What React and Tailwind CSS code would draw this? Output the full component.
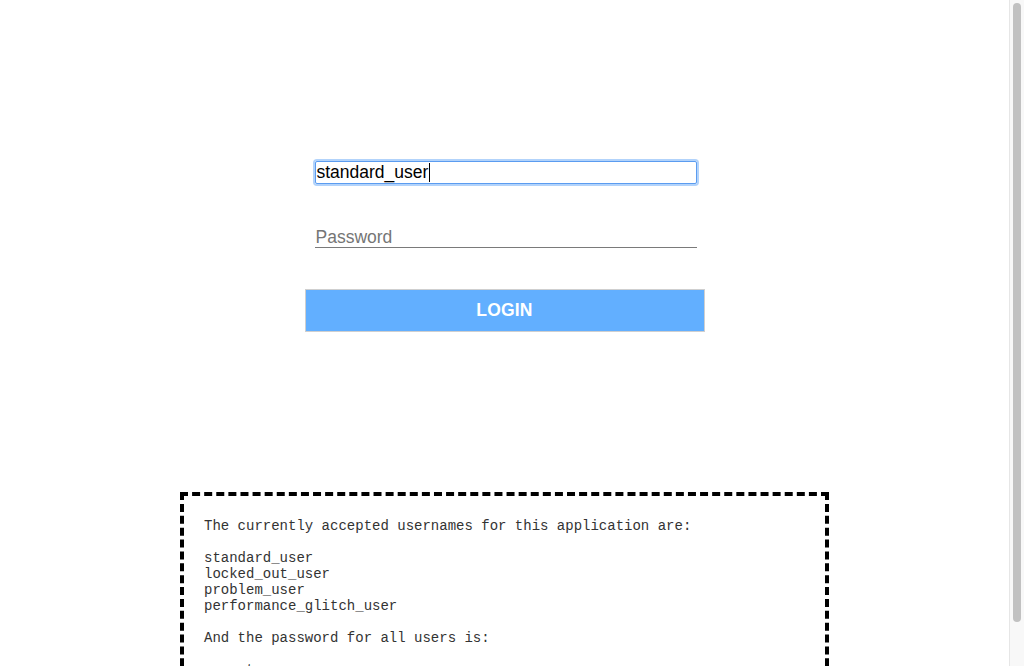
import React from "react";

const usernames = [
  "standard_user",
  "locked_out_user",
  "problem_user",
  "performance_glitch_user",
];

export default function App() {
  return (
    <div className="h-screen flex bg-white font-['Liberation_Sans',Arial,sans-serif]">
      <main className="flex-1 overflow-hidden">
        {/* Login form */}
        <div className="pt-[161px] flex flex-col items-center">
          <div className="w-[400px] flex flex-col items-center">
            <div className="ml-[2px] w-[382px] h-[23px] flex items-center pl-[1px] border border-[#5b9cf0] rounded-[2px] shadow-[0_0_0_2px_#b2d3fb] text-[17.5px] text-black">
              <span>standard_user</span>
              <span className="ml-[1px] w-px h-[19px] bg-black" />
            </div>

            <div className="mt-[37px] ml-[2px] w-[382px] h-[27px] flex items-end pl-[1px] border-b border-[#7a7a7a] text-[17.5px] leading-[20px] text-[#757575]">
              Password
            </div>

            <button className="mt-[41px] w-[400px] h-[43px] bg-[#62afff] border border-[#cfcfcf] text-white font-bold text-[17.5px] tracking-[0.2px]">
              LOGIN
            </button>
          </div>
        </div>

        {/* Credentials box */}
        <div className="mt-[160px] pb-[14px] flex justify-center">
          <div className="w-[649px] border-4 border-dashed border-black pt-[22px] pb-[20px] pl-[20px] font-['Liberation_Mono','Courier_New',monospace] text-[14px] leading-[16px] text-[#333]">
            <p>The currently accepted usernames for this application are:</p>
            <div className="mt-[16px]">
              {usernames.map((u) => (
                <p key={u}>{u}</p>
              ))}
            </div>
            <p className="mt-[16px]">And the password for all users is:</p>
            <p className="mt-[16px]">secret_sauce</p>
          </div>
        </div>
      </main>

      {/* Scrollbar */}
      <div className="w-[15px] shrink-0 bg-[#f8f8f8] border-l border-[#e6e6e6] pt-[3px] pl-[3px]">
        <div className="w-[8px] h-[619px] rounded-full bg-[#c1c1c1]" />
      </div>
    </div>
  );
}
